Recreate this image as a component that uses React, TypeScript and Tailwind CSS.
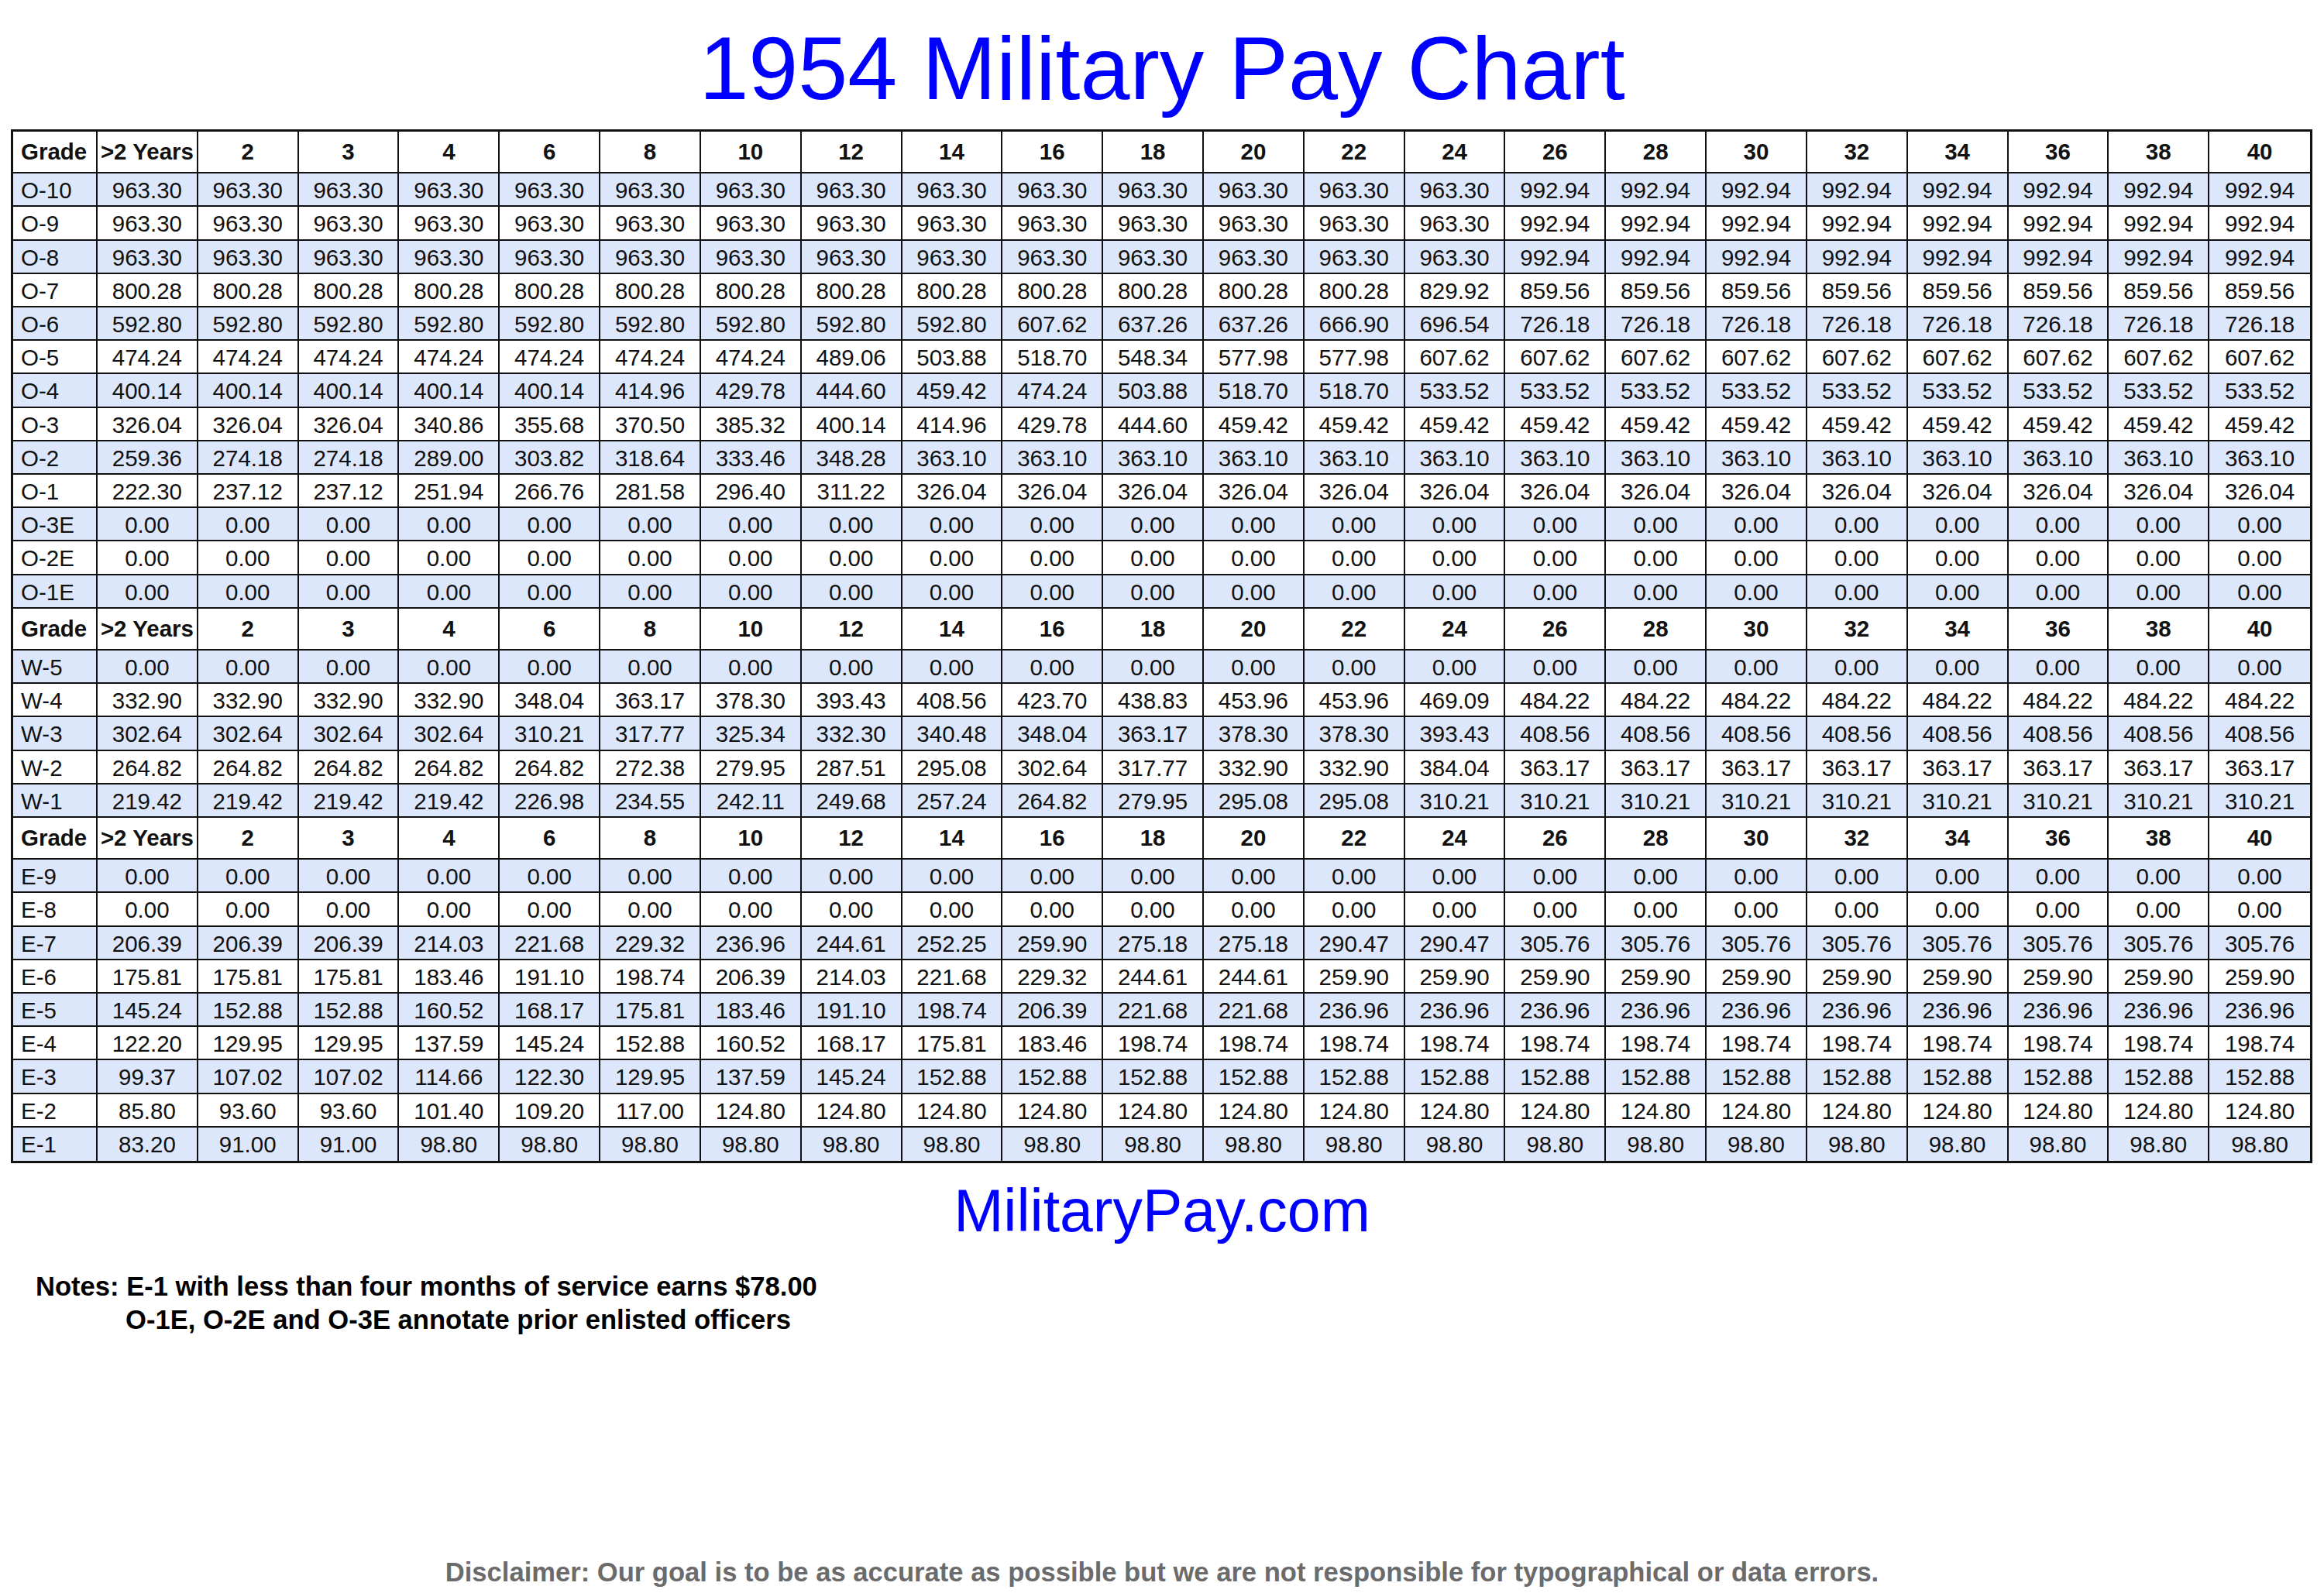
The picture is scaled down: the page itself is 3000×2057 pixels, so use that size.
import React from 'react';

const YEARS = ['>2 Years', '2', '3', '4', '6', '8', '10', '12', '14', '16', '18', '20', '22', '24', '26', '28', '30', '32', '34', '36', '38', '40'];

const rep = (v: string, n: number): string[] => Array(n).fill(v);

type Row = { grade: string; pay: string[] };

const officers: Row[] = [
  { grade: 'O-10', pay: [...rep('963.30', 14), ...rep('992.94', 8)] },
  { grade: 'O-9', pay: [...rep('963.30', 14), ...rep('992.94', 8)] },
  { grade: 'O-8', pay: [...rep('963.30', 14), ...rep('992.94', 8)] },
  { grade: 'O-7', pay: [...rep('800.28', 13), '829.92', ...rep('859.56', 8)] },
  { grade: 'O-6', pay: [...rep('592.80', 9), '607.62', '637.26', '637.26', '666.90', '696.54', ...rep('726.18', 8)] },
  { grade: 'O-5', pay: [...rep('474.24', 7), '489.06', '503.88', '518.70', '548.34', '577.98', '577.98', ...rep('607.62', 9)] },
  { grade: 'O-4', pay: [...rep('400.14', 5), '414.96', '429.78', '444.60', '459.42', '474.24', '503.88', '518.70', '518.70', ...rep('533.52', 9)] },
  { grade: 'O-3', pay: ['326.04', '326.04', '326.04', '340.86', '355.68', '370.50', '385.32', '400.14', '414.96', '429.78', '444.60', ...rep('459.42', 11)] },
  { grade: 'O-2', pay: ['259.36', '274.18', '274.18', '289.00', '303.82', '318.64', '333.46', '348.28', ...rep('363.10', 14)] },
  { grade: 'O-1', pay: ['222.30', '237.12', '237.12', '251.94', '266.76', '281.58', '296.40', '311.22', ...rep('326.04', 14)] },
  { grade: 'O-3E', pay: rep('0.00', 22) },
  { grade: 'O-2E', pay: rep('0.00', 22) },
  { grade: 'O-1E', pay: rep('0.00', 22) },
];

const warrants: Row[] = [
  { grade: 'W-5', pay: rep('0.00', 22) },
  { grade: 'W-4', pay: [...rep('332.90', 4), '348.04', '363.17', '378.30', '393.43', '408.56', '423.70', '438.83', '453.96', '453.96', '469.09', ...rep('484.22', 8)] },
  { grade: 'W-3', pay: [...rep('302.64', 4), '310.21', '317.77', '325.34', '332.30', '340.48', '348.04', '363.17', '378.30', '378.30', '393.43', ...rep('408.56', 8)] },
  { grade: 'W-2', pay: [...rep('264.82', 5), '272.38', '279.95', '287.51', '295.08', '302.64', '317.77', '332.90', '332.90', '384.04', ...rep('363.17', 8)] },
  { grade: 'W-1', pay: [...rep('219.42', 4), '226.98', '234.55', '242.11', '249.68', '257.24', '264.82', '279.95', '295.08', '295.08', ...rep('310.21', 9)] },
];

const enlisted: Row[] = [
  { grade: 'E-9', pay: rep('0.00', 22) },
  { grade: 'E-8', pay: rep('0.00', 22) },
  { grade: 'E-7', pay: [...rep('206.39', 3), '214.03', '221.68', '229.32', '236.96', '244.61', '252.25', '259.90', '275.18', '275.18', '290.47', '290.47', ...rep('305.76', 8)] },
  { grade: 'E-6', pay: [...rep('175.81', 3), '183.46', '191.10', '198.74', '206.39', '214.03', '221.68', '229.32', '244.61', '244.61', ...rep('259.90', 10)] },
  { grade: 'E-5', pay: ['145.24', '152.88', '152.88', '160.52', '168.17', '175.81', '183.46', '191.10', '198.74', '206.39', '221.68', '221.68', ...rep('236.96', 10)] },
  { grade: 'E-4', pay: ['122.20', '129.95', '129.95', '137.59', '145.24', '152.88', '160.52', '168.17', '175.81', '183.46', ...rep('198.74', 12)] },
  { grade: 'E-3', pay: ['99.37', '107.02', '107.02', '114.66', '122.30', '129.95', '137.59', '145.24', ...rep('152.88', 14)] },
  { grade: 'E-2', pay: ['85.80', '93.60', '93.60', '101.40', '109.20', '117.00', ...rep('124.80', 16)] },
  { grade: 'E-1', pay: ['83.20', '91.00', '91.00', ...rep('98.80', 19)] },
];

const gridCols = 'grid grid-cols-[109px_repeat(22,minmax(0,1fr))]';

const HeaderRow = () => (
  <div className={`${gridCols} h-[54.3px] border-b-2 border-[#111] bg-white font-bold`}>
    <div className="flex items-center pl-[10px] border-r-2 border-[#111]">Grade</div>
    {YEARS.map((y, i) => (
      <div
        key={y}
        className={`flex items-center justify-center whitespace-nowrap ${i < YEARS.length - 1 ? 'border-r-2 border-[#111]' : ''}`}
      >
        {y}
      </div>
    ))}
  </div>
);

const PayRow = ({ row, shaded, last }: { row: Row; shaded: boolean; last: boolean }) => (
  <div
    className={`${gridCols} h-[43.2px] ${last ? '' : 'border-b-2 border-[#111]'} ${shaded ? 'bg-[#dde7fb]' : 'bg-white'}`}
  >
    <div className="flex items-center pl-[10px] border-r-2 border-[#111]">{row.grade}</div>
    {row.pay.map((p, i) => (
      <div
        key={i}
        className={`flex items-center justify-center ${i < row.pay.length - 1 ? 'border-r-2 border-[#111]' : ''}`}
      >
        {p}
      </div>
    ))}
  </div>
);

const Section = ({ rows, lastSection }: { rows: Row[]; lastSection?: boolean }) => (
  <>
    <HeaderRow />
    {rows.map((r, i) => (
      <PayRow key={r.grade} row={r} shaded={i % 2 === 0} last={!!lastSection && i === rows.length - 1} />
    ))}
  </>
);

export default function App() {
  return (
    <div className="w-[3000px] h-[2057px] bg-white text-[#111] font-['Liberation_Sans',Arial,sans-serif] overflow-hidden">
      {/* Title */}
      <h1 className="pt-[31px] text-center text-[115px] leading-[115px] text-[#0000ff] font-normal">
        1954 Military Pay Chart
      </h1>

      {/* Pay table */}
      <div className="mt-[21px] ml-[14px] w-[2971px] border-[3px] border-[#111] text-[29.5px]">
        <Section rows={officers} />
        <Section rows={warrants} />
        <Section rows={enlisted} lastSection />
      </div>

      <div className="mt-[23px] text-center text-[77px] leading-[76px] text-[#0000ff]">MilitaryPay.com</div>

      {/* Notes */}
      <div className="mt-[39px] pl-[46px] text-[34.6px] leading-[43px] font-bold text-black">
        <p>Notes: E-1 with less than four months of service earns $78.00</p>
        <p className="pl-[116px]">O-1E, O-2E and O-3E annotate prior enlisted officers</p>
      </div>

      <div className="mt-[283px] text-center text-[34.6px] leading-[43px] font-bold text-[#6b6b6b]">
        Disclaimer: Our goal is to be as accurate as possible but we are not responsible for typographical or data errors.
      </div>
    </div>
  );
}
